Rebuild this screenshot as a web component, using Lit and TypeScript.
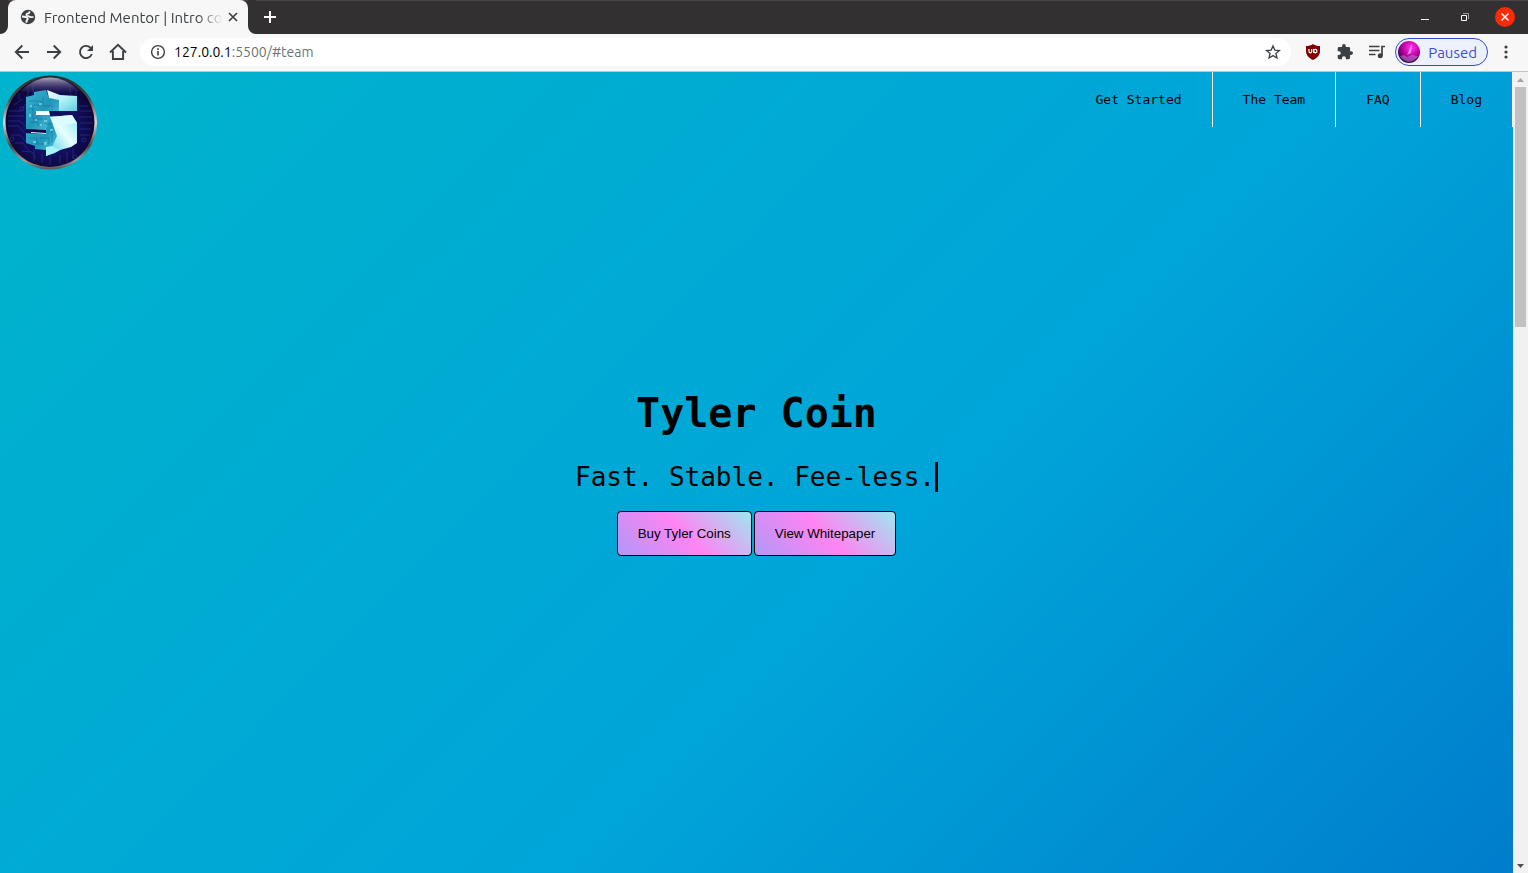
import { LitElement, html, css } from "lit";
import { customElement } from "lit/decorators.js";

@customElement("app-root")
export class AppRoot extends LitElement {
  static styles = css`
    :host { display: flex; flex-direction: column; min-height: 100vh; font-family: Ubuntu, "Noto Sans", sans-serif; color: #3c4043; }
    * { box-sizing: border-box; }
    button { border: 0; padding: 0; background: none; color: inherit; font-family: inherit; display: flex; align-items: center; justify-content: center; }
    svg { display: block; flex: none; }
    .tabs { display: flex; height: 34px; background: #333031; box-shadow: inset 0 1px #484546; padding-right: 13px; align-items: stretch; }
    .edge { width: 8px; padding-top: 24px; background: linear-gradient(#333031, #333031) top / 100% 24px no-repeat #f7f7f7; }
    .edge i { display: block; height: 100%; background: #333031; }
    .edge.left i { border-bottom-right-radius: 8px; }
    .edge.right i { border-bottom-left-radius: 8px; }
    .tab { display: flex; align-items: center; width: 240px; background: #f7f7f7; border-radius: 8px 8px 0 0; padding: 0 8px 0 12px; }
    .tab-title { flex: 1; margin: 0 2px 0 8px; font-size: 15px; white-space: nowrap; -webkit-mask-image: linear-gradient(to right, #000 86%, transparent); mask-image: linear-gradient(to right, #000 86%, transparent); }
    .new { width: 28px; margin-left: 0; color: #fff; }
    .space { flex: 1; }
    .win { width: 40px; color: #fff; }
    .close { align-self: center; width: 20px; height: 20px; margin-left: 10px; border-radius: 50%; background: #fb2a05; color: #fff; }
    .toolbar { display: flex; align-items: center; height: 38px; background: #f7f7f7; border-bottom: 1px solid #c4c4c4; padding: 0 6px 1px; color: #3c4043; }
    .tool { width: 32px; height: 28px; }
    .address { flex: 1; display: flex; align-items: center; height: 28px; margin: 0 6px; padding: 0 10px; border-radius: 14px; background: #fff; }
    .url { flex: 1; margin-left: 8px; font-size: 14px; line-height: 28px; }
    .url span { color: #6f7377; }
    .url b { font-weight: 400; color: #000; }
    .profile { height: 28px; margin: 0 2px; padding: 0 10px 0 2px; gap: 8px; border: 1px solid #2f4bd6; border-radius: 14px; background: #edf1fb; color: #3b4fd3; font-size: 15px; }
    .viewport { flex: 1; display: flex; }
    .page { flex: 1; display: flex; flex-direction: column; background: linear-gradient(135deg, #00b4cc 0%, #00a4d9 60%, #007dcc 100%); font-family: "DejaVu Sans Mono", monospace; color: #000; }
    .header { display: flex; justify-content: space-between; align-items: flex-start; height: 100px; }
    .nav { display: flex; }
    .nav a { padding: 0 30px; border-right: 1px solid #fff; font-size: 13px; line-height: 55px; color: #000; text-decoration: none; }
    .hero { flex: 1; display: flex; flex-direction: column; align-items: center; justify-content: center; padding-bottom: 101px; }
    h1 { margin: 0; font-size: 40px; line-height: 48px; }
    .tag { margin: 25px 0 19px; border-right: 3px solid #000; font-size: 26px; line-height: 30px; }
    .actions { display: flex; gap: 2px; }
    .actions button { height: 45px; padding: 0 20px; border: 1px solid #000; border-radius: 4px; background: linear-gradient(45deg, #b197f7 0%, #ff84f3 50%, #9ce8ef 100%); color: #000; font-family: "Liberation Sans", Arial, sans-serif; }
    .scroll { display: flex; flex-direction: column; align-items: center; width: 15px; background: #f1f1f1; }
    .scroll button { width: 15px; height: 15px; }
    .thumb { width: 11px; height: 30%; background: #c1c1c1; }
  `;

  render() {
    return html`
      <div class="tabs">
        <div class="edge left"><i></i></div>
        <div class="tab">
          <svg width="16" height="16" viewBox="0 0 16 16"><circle cx="8" cy="8" r="7.2" fill="#3c4043"/><path d="M9.500 2.300C9.600 4.400 8.600 4.700 7 4.800 6 5 6.300 6.600 7.200 6.900 9 7 9.300 8 10.800 8.200L13.600 8" fill="none" stroke="#f7f7f7" stroke-width="1.700"/><path d="M2 7.600C5 7.600 7.800 8.400 7.700 9.800 7.600 11 6.400 10.900 6.300 13.600" fill="none" stroke="#f7f7f7" stroke-width="2"/></svg>
          <div class="tab-title">Frontend Mentor | Intro co</div>
          <button aria-label="Close tab"><svg width="16" height="16" viewBox="0 0 16 16"><path d="M4 4l8 8M12 4l-8 8" stroke="#3c4043" stroke-width="1.700"/></svg></button>
        </div>
        <div class="edge right"><i></i></div>
        <button class="new" aria-label="New tab"><svg width="14" height="14" viewBox="0 0 14 14"><path d="M7 1v12M1 7h12" stroke="currentColor" stroke-width="2"/></svg></button>
        <div class="space"></div>
        <button class="win" aria-label="Minimize"><svg width="10" height="10" viewBox="0 0 10 10"><path d="M1 7.500h8" stroke="currentColor"/></svg></button>
        <button class="win" aria-label="Restore"><svg width="10" height="10" viewBox="0 0 10 10"><path d="M1.500 3.500h5v5h-5z" fill="none" stroke="currentColor"/><path d="M3 1.500h5.500V7" fill="none" stroke="#a09e9f"/></svg></button>
        <button class="close" aria-label="Close window"><svg width="10" height="10" viewBox="0 0 10 10"><path d="M1.500 1.500l7 7M8.500 1.500l-7 7" stroke="currentColor" stroke-width="1.500"/></svg></button>
      </div>
      <div class="toolbar">
        <button class="tool" aria-label="Back"><svg width="16" height="16" viewBox="0 0 16 16"><path d="M15 8H2M8.300 1.500L1.800 8l6.500 6.500" fill="none" stroke="currentColor" stroke-width="1.900"/></svg></button>
        <button class="tool" aria-label="Forward"><svg width="16" height="16" viewBox="0 0 16 16"><path d="M1 8h13M7.700 1.500L14.200 8l-6.500 6.500" fill="none" stroke="currentColor" stroke-width="1.900"/></svg></button>
        <button class="tool" aria-label="Reload"><svg width="16" height="16" viewBox="0 0 16 16"><path d="M13.800 10A6.100 6.100 0 1 1 12.400 3.700L14 5.300" fill="none" stroke="currentColor" stroke-width="1.900"/><path d="M15 1v6H9z" fill="currentColor"/></svg></button>
        <button class="tool" aria-label="Home"><svg width="18" height="18" viewBox="0 0 18 18"><path d="M1 9.500L9 1.800l8 7.700M3.900 8v8h10.200V8" fill="none" stroke="currentColor" stroke-width="1.900"/></svg></button>
        <div class="address">
          <svg width="16" height="16" viewBox="0 0 16 16"><circle cx="8" cy="8" r="6.400" fill="none" stroke="#3c4043" stroke-width="1.400"/><path d="M8 7v4.500M8 4.300v1.600" stroke="#3c4043" stroke-width="1.600"/></svg>
          <div class="url"><b>127.0.0.1</b><span>:5500/#team</span></div>
          <button aria-label="Bookmark this tab"><svg width="16" height="16" viewBox="0 0 16 16"><path d="M8 1.900l1.800 4.200 4.600.4-3.500 3 1.100 4.500L8 11.600 4 14l1.100-4.500-3.500-3 4.600-.4z" fill="none" stroke="#3c4043" stroke-width="1.300"/></svg></button>
        </div>
        <button class="tool" aria-label="Ad blocker"><svg width="16" height="16" viewBox="0 0 16 16"><path d="M8 0c2 1.400 4 2 7 2v5c0 4-2.500 7-7 9-4.500-2-7-5-7-9V2c3 0 5-.6 7-2z" fill="#800000"/><path d="M4 5v2.500a1.300 1.300 0 0 0 2.700 0V5M8.600 5v4" stroke="#fff" fill="none" stroke-width="1.200"/><circle cx="10.300" cy="7.100" r="1.700" fill="none" stroke="#fff" stroke-width="1.200"/></svg></button>
        <button class="tool" aria-label="Extensions"><svg width="16" height="16" viewBox="1 1 22 22"><path fill="currentColor" d="M20.500 11H19V7a2 2 0 0 0-2-2h-4V3.500a2.500 2.500 0 0 0-5 0V5H4a2 2 0 0 0-2 2v3.800h1.500a2.700 2.700 0 0 1 0 5.400H2V20a2 2 0 0 0 2 2h3.800v-1.500a2.700 2.700 0 0 1 5.400 0V22H17a2 2 0 0 0 2-2v-4h1.500a2.500 2.500 0 0 0 0-5z"/></svg></button>
        <button class="tool" aria-label="Media controls"><svg width="18" height="16" viewBox="0 0 18 16"><path d="M1 2.500h10.500M1 6.500h10.500M1 10.500h6.500M14 12V2.500h3" fill="none" stroke="currentColor" stroke-width="1.700"/><circle cx="12.300" cy="11.800" r="2.500" fill="currentColor"/></svg></button>
        <button class="profile"><svg width="22" height="22" viewBox="0 0 22 22"><defs><radialGradient id="ball" cx=".6" cy=".3" r=".72"><stop offset="0" stop-color="#ff3dec"/><stop offset=".5" stop-color="#c800a8"/><stop offset="1" stop-color="#2b0743"/></radialGradient></defs><circle cx="11" cy="11" r="11" fill="url(#ball)"/><path d="M9 14L14 3l-1 9z" fill="#ffb3f8" opacity=".7"/><path d="M2 15l4-1 3 2 5-2 6 1q-3 5-9 6-6-1-9-6z" fill="#c08be0" opacity=".5"/></svg>Paused</button>
        <button class="tool" aria-label="Browser menu"><svg width="4" height="14" viewBox="0 0 4 14" fill="currentColor"><circle cx="2" cy="2" r="1.600"/><circle cx="2" cy="7" r="1.600"/><circle cx="2" cy="12" r="1.600"/></svg></button>
      </div>
      <div class="viewport">
        <main class="page">
          <header class="header">
            ${this.logo()}
            <nav class="nav"><a href="#start">Get Started</a><a href="#team">The Team</a><a href="#faq">FAQ</a><a href="#blog">Blog</a></nav>
          </header>
          <section class="hero">
            <h1>Tyler Coin</h1>
            <div class="tag">Fast. Stable. Fee-less.</div>
            <div class="actions"><button>Buy Tyler Coins</button><button>View Whitepaper</button></div>
          </section>
        </main>
        <div class="scroll">
          <button aria-label="Scroll up"><svg width="7" height="4" viewBox="0 0 7 4"><path d="M0 4L3.500 0 7 4z" fill="#a3a3a3"/></svg></button>
          <div class="thumb"></div>
          <div class="space"></div>
          <button aria-label="Scroll down"><svg width="7" height="4" viewBox="0 0 7 4"><path d="M0 0h7L3.500 4z" fill="#505050"/></svg></button>
        </div>
      </div>`;
  }

  private logo() {
    return html`<svg width="100" height="100" viewBox="0 0 100 100" role="img" aria-label="Tyler Coin logo">
      <defs>
        <linearGradient id="rim" x1="0" y1="0" x2="0" y2="1"><stop offset="0" stop-color="#2a2a2e"/><stop offset=".25" stop-color="#4a4a4c"/><stop offset=".5" stop-color="#ded6d4"/><stop offset=".75" stop-color="#4a4442"/><stop offset=".9" stop-color="#a09a98"/><stop offset="1" stop-color="#555"/></linearGradient>
        <radialGradient id="core" cx=".5" cy=".55" r=".55"><stop offset="0" stop-color="#1a1c86"/><stop offset=".6" stop-color="#120d5c"/><stop offset="1" stop-color="#0c0430"/></radialGradient>
        <linearGradient id="shine" x1="0" y1="0" x2="0" y2="1"><stop offset="0" stop-color="#d6d0e8" stop-opacity=".8"/><stop offset="1" stop-color="#5a508c" stop-opacity="0"/></linearGradient>
        <linearGradient id="face" x1="0" y1="0" x2="1" y2="1"><stop offset="0" stop-color="#3cb4d0"/><stop offset=".5" stop-color="#1f95ba"/><stop offset="1" stop-color="#5fd4e8"/></linearGradient>
        <linearGradient id="ice" x1="0" y1="0" x2="1" y2="1"><stop offset="0" stop-color="#f2ffff"/><stop offset=".5" stop-color="#b4f1f8"/><stop offset="1" stop-color="#55cfe4"/></linearGradient>
        <linearGradient id="cube" x1="1" y1="0" x2="0" y2="1"><stop offset="0" stop-color="#8fe6f2"/><stop offset=".5" stop-color="#e9ffff"/><stop offset="1" stop-color="#5ed6e8"/></linearGradient>
      </defs>
      <circle cx="50" cy="50.500" r="47" fill="url(#rim)"/>
      <circle cx="50" cy="50.500" r="44.500" fill="url(#core)"/>
      <g fill="none" stroke="#2a3f9c" stroke-width=".8" opacity=".7">
        <path d="M9 39h12l4-4M8 44h16M8 49h12l5 5M8 54h10l6 6M11 63h9l6 7M15 71h8l6 8M22 79l10 1 4 6M78 34h10M80 39h11M79 45h13M80 51h13M80 57h11M80 63h10M73 77v10M67 80v11M60 83v9M50 84v9M42 82v9M34 78v11M28 18v12l-6 6M33 14v10M70 14v7l5 5M76 19v10M14 33l8-6M19 27v-6"/>
        <circle cx="12" cy="67" r="2"/><circle cx="22" cy="37" r="2"/><circle cx="75" cy="85" r="2"/><circle cx="84" cy="68" r="2"/>
      </g>
      <path d="M20 19Q50-8 80 19Q51 25 20 19z" fill="url(#shine)"/>
      <path d="M26 25l8-2v-3l12-2 3 8 11 1v12H36v4h14v16l-24-2z" fill="url(#face)"/>
      <path d="M26 61l20 1v-4l4-14 12 2v31l-7 4-9 3v-6l-11-1v-3l-9-3z" fill="url(#face)"/>
      <path d="M47 18l13 5 17 1v15H59V28l-10-2z" fill="url(#ice)"/>
      <path d="M50 45l22-2 5 8v20l-6 4-11 3-8-3 5-11z" fill="url(#cube)"/>
      <path d="M50 45l22-2 5 8-18 3z" fill="#dcfbfd"/>
      <path d="M46 75l6-1 8 4-6 3-8 3z" fill="#a9f3fa"/>
      <path d="M36 39h19v4H36z" fill="#f4ffff"/>
      <path d="M49 39h20l-1 4H50z" fill="#10105e"/>
      <path d="M26 57l20 1v4l-20-1z" fill="#0a0a45"/>
      <path d="M31 60l15 1v1l-15-1z" fill="#dffaff"/>
      <g fill="none" stroke="#126b93" stroke-width=".7" opacity=".7"><path d="M29 29h12v4h-8v5M43 25v9h12M28 37h5v10h10M30 50h8v4M46 46v6h7M29 66h8v6h6M40 66h9v6h-7M52 58v12"/></g>
      <g fill="#8fe6f0" opacity=".6"><path d="M30 33h2v2h-2zM39 31h3v2h-3zM35 47h2v2h-2zM44 48h3v2h-3zM33 69h3v2h-3zM44 70h3v3h-3zM50 57h3v2h-3zM29 42h2v3h-2zM40 52h2v2h-2z"/></g>
    </svg>`;
  }
}
